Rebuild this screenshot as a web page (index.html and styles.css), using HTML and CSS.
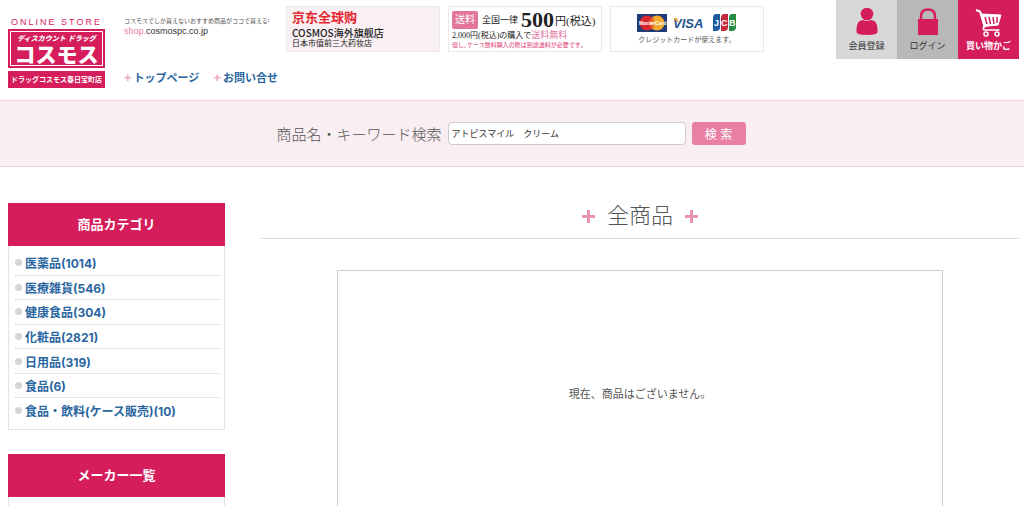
FILE: index.html
```html
<!DOCTYPE html>
<html lang="ja">
  <head>
    <meta charset="utf-8">
    <title>全商品</title>
    <link rel="stylesheet" href="styles.css">
  </head>
  <body>
    <header class="header">
      <a class="logo" href="#">
        <span class="logo-store">ONLINE STORE</span>
        <span class="logo-box">
          <span class="logo-sub">ディスカウント ドラッグ</span>
          <span class="logo-name">コスモス</span>
        </span>
        <span class="logo-branch">ドラッグコスモス春日宝町店</span>
      </a>
      <div class="intro">
        <p class="catch">コスモスでしか買えないおすすめ商品がココで買える!</p>
        <p class="domain"><span>shop.</span>cosmospc.co.jp</p>
        <nav class="nav">
          <a href="#"><b>+</b>トップページ</a>
          <a href="#"><b>+</b>お問い合せ</a>
        </nav>
      </div>
      <div class="banners">
        <a class="banner global" href="#">
          <span class="global-title">京东全球购</span>
          <span class="global-shop">COSMOS海外旗舰店</span>
          <span class="global-note">日本市值前三大药妆店</span>
        </a>
        <div class="banner postage">
          <div class="postage-main">
            <span class="postage-tag">送料</span>
            <span class="postage-area">全国一律</span>
            <span class="postage-price">500</span>
            <span class="postage-yen">円(税込)</span>
          </div>
          <div class="postage-free">2,000円(税込)の購入で<span>送料無料</span></div>
          <div class="postage-note">但し､ケース飲料購入の際は別途送料が必要です｡</div>
        </div>
        <div class="banner cards">
          <svg width="100" height="20" viewBox="0 0 100 20" role="img" aria-label="MasterCard VISA JCB">
            <rect x="0" y="1" width="30" height="18" fill="#1f3b78"/>
            <circle cx="10" cy="10" r="7.5" fill="#d9252c"/>
            <circle cx="20" cy="10" r="7.5" fill="#f3a92e"/>
            <path d="M13 6h4M12 8h5M12 12h5M13 14h4" stroke="#d9252c"/>
            <text x="2" y="12" class="mc-text">MasterCard</text>
            <text x="36" y="15" class="visa-text">VISA</text>
            <path d="M36 5h4l2 5z" fill="#e6a43a"/>
            <path d="M79 1h4v13q0 4-4 4h-3V5q0-4 3-4z" fill="#1d5c9f"/>
            <path d="M87 1h4v13q0 4-4 4h-3V5q0-4 3-4z" fill="#c5283d"/>
            <path d="M95 1h4v13q0 4-4 4h-3V5q0-4 3-4z" fill="#268b43"/>
            <text x="77" y="13" class="jcb-text">J</text>
            <text x="84" y="13" class="jcb-text">C</text>
            <text x="92" y="13" class="jcb-text">B</text>
          </svg>
          <span class="cards-note">クレジットカードが使えます。</span>
        </div>
      </div>
      <nav class="user">
        <a class="user-join" href="#">
          <svg width="22" height="30" viewBox="0 0 22 30" fill="#d51d5c">
            <circle cx="11" cy="7" r="6.3"/>
            <path d="M.5 25v-3q0-8.500 6.500-9 4 2 8 0 6.500.5 6.500 9v3q0 3-10.500 3T.5 25z"/>
          </svg>
          会員登録
        </a>
        <a class="user-login" href="#">
          <svg width="22" height="30" viewBox="0 0 22 30">
            <path d="M4 14V9.500q0-7 7-7t7 7V14" fill="none" stroke="#d51d5c" stroke-width="2.500"/>
            <rect x="1" y="12" width="20" height="16" fill="#d51d5c"/>
          </svg>
          ログイン
        </a>
        <a class="user-cart" href="#">
          <svg width="28" height="30" viewBox="0 0 28 30" fill="none" stroke="#fff">
            <path d="M1 3l4 1.500 5 16" stroke-width="2"/>
            <path d="M6 7l20 1-3 10-14 1.500z" fill="#fff"/>
            <path d="M10 10l2 7M14 10l1.500 7M18 10l1 7M22 10l0 6" stroke="#d51d5c" stroke-width="1.500"/>
            <path d="M9.500 19q-3 4 1 4h14" stroke-width="1.500"/>
            <circle cx="11" cy="27" r="2" stroke-width="1.500"/>
            <circle cx="22" cy="27" r="2" stroke-width="1.500"/>
          </svg>
          買い物かご
        </a>
      </nav>
    </header>

    <form class="search">
      <label for="keyword">商品名・キーワード検索</label>
      <input type="text" id="keyword" value="アトピスマイル　クリーム">
      <button type="submit">検 索</button>
    </form>

    <div class="content">
      <aside class="side">
        <section class="side-box">
          <h2>商品カテゴリ</h2>
          <ul>
            <li><a href="#">医薬品(1014)</a></li>
            <li><a href="#">医療雑貨(546)</a></li>
            <li><a href="#">健康食品(304)</a></li>
            <li><a href="#">化粧品(2821)</a></li>
            <li><a href="#">日用品(319)</a></li>
            <li><a href="#">食品(6)</a></li>
            <li><a href="#">食品・飲料(ケース販売)(10)</a></li>
          </ul>
        </section>
        <section class="side-box">
          <h2>メーカー一覧</h2>
          <ul></ul>
        </section>
      </aside>
      <main class="main">
        <h1>全商品</h1>
        <p class="empty">現在、商品はございません。</p>
      </main>
    </div>
  </body>
</html>
```
FILE: styles.css
```css
*{
  box-sizing: border-box;
}
body{
  margin: 0;
  background: #fff;
  color: #555;
  font-family: "Liberation Sans", "Noto Sans CJK JP", sans-serif;
  font-size: 12px;
}
p, h1, h2, ul{
  margin: 0;
  padding: 0;
}
a{
  color: #2a66a0;
  text-decoration: none;
}

/* header */
.header{
  display: flex;
  align-items: flex-start;
  min-height: 100px;
  padding: 0 5px 0 8px;
}
.logo{
  display: flex;
  flex-direction: column;
  width: 97px;
  padding-top: 16px;
  color: #fff;
  text-align: center;
  white-space: nowrap;
}
.logo-store{
  color: #d51d5c;
  font-size: 9px;
  line-height: 13px;
  letter-spacing: 2px;
}
.logo-box{
  display: flex;
  flex-direction: column;
  height: 39px;
  padding-top: 3px;
  background: #d51d5c;
  border: 1px solid #d51d5c;
  outline: 1px solid #fff;
  outline-offset: -3px;
}
.logo-sub{
  font-size: 7px;
  font-weight: 900;
  font-style: italic;
  line-height: 12px;
}
.logo-name{
  font-size: 21px;
  font-weight: 900;
  line-height: 19px;
}
.logo-branch{
  margin-top: 3px;
  background: #d51d5c;
  font-size: 7px;
  font-weight: bold;
  line-height: 17px;
}
.intro{
  width: 162px;
  margin-left: 19px;
  padding-top: 16px;
  white-space: nowrap;
}
.catch{
  font-size: 6px;
  line-height: 10px;
}
.domain{
  color: #333;
  font-size: 9px;
  line-height: 10px;
}
.domain span{
  color: #e87fa5;
}
.nav{
  display: flex;
  gap: 14px;
  margin-top: 34px;
  font-size: 11px;
  font-weight: bold;
  line-height: 16px;
}
.nav b{
  margin-right: 2px;
  color: #efa3bd;
  font-size: 13px;
}
.banners{
  display: flex;
  gap: 8px;
  padding-top: 6px;
}
.banner{
  display: flex;
  flex-direction: column;
  width: 154px;
  height: 46px;
  padding: 3px 5px;
  border: 1px solid #e9e9e9;
  white-space: nowrap;
}
.global{
  background: #f8f0f2;
  color: #222;
  font-family: "Liberation Sans", "Noto Sans CJK SC", sans-serif;
}
.global-title{
  color: #e5252d;
  font-size: 13px;
  font-weight: bold;
  line-height: 16px;
}
.global-shop{
  font-family: "Noto Sans CJK SC", sans-serif;
  font-size: 10px;
  font-weight: 500;
  line-height: 13px;
}
.global-note{
  font-size: 8px;
  line-height: 9px;
}
.postage{
  padding: 3px;
  color: #222;
  font-family: "Liberation Serif", "Noto Sans CJK JP", serif;
}
.postage-main{
  display: flex;
  align-items: center;
  height: 19px;
}
.postage-tag{
  width: 26px;
  margin-right: 4px;
  border-radius: 2px;
  background: #e4759d;
  color: #fff;
  font-size: 10px;
  line-height: 18px;
  text-align: center;
}
.postage-area{
  margin-right: 3px;
  font-size: 9px;
}
.postage-price{
  font-size: 22px;
  font-weight: bold;
  line-height: 19px;
}
.postage-yen{
  margin-left: 1px;
  font-size: 11px;
}
.postage-free{
  margin-top: 1px;
  font-size: 8px;
  line-height: 10px;
}
.postage-free span{
  color: #e4759d;
  font-size: 9px;
  line-height: 10px;
}
.postage-note{
  color: #e0356f;
  font-size: 6px;
  line-height: 9px;
}
.cards{
  align-items: center;
  padding-top: 6px;
}
.cards-note{
  font-size: 7px;
  line-height: 14px;
}
.mc-text{
  fill: #fff;
  font-size: 5px;
  font-weight: bold;
}
.visa-text{
  fill: #1f5591;
  font-size: 13px;
  font-style: italic;
  font-weight: bold;
}
.jcb-text{
  fill: #fff;
  font-size: 9px;
  font-weight: bold;
}
.user{
  display: flex;
  margin-left: auto;
}
.user a{
  display: flex;
  flex-direction: column;
  align-items: center;
  width: 61px;
  height: 59px;
  padding-top: 7px;
  font-size: 9px;
  line-height: 19px;
  color: #333;
}
.user .user-join{
  background: #d8d8d8;
}
.user .user-login{
  background: #b8b8b8;
}
.user .user-cart{
  background: #d51d5c;
  color: #fff;
  font-weight: bold;
}

/* search */
.search{
  display: flex;
  align-items: center;
  justify-content: center;
  gap: 6px;
  height: 67px;
  padding-right: 2px;
  border-top: 1px solid #f5cfdb;
  border-bottom: 1px solid #f5cfdb;
  background: #f9eef2;
}
.search label{
  font-size: 15px;
  font-weight: 300;
}
.search input{
  width: 238px;
  height: 23px;
  padding: 0 3px;
  border: 1px solid #ccc;
  border-radius: 4px;
  background: #fff;
  color: #333;
  font-family: inherit;
  font-size: 9px;
}
.search button{
  width: 54px;
  height: 23px;
  padding: 0;
  border: 0;
  border-radius: 3px;
  background: #e97fa4;
  color: #fff;
  font-family: inherit;
  font-size: 12px;
}

/* content */
.content{
  display: flex;
  gap: 36px;
  padding: 36px 5px 0 8px;
}
.side{
  flex: none;
  width: 217px;
}
.side-box{
  margin-bottom: 24px;
  border: 1px solid #e2e2e2;
}
.side-box h2{
  margin: -1px -1px 0;
  background: #d51d5c;
  color: #fff;
  font-size: 13px;
  line-height: 43px;
  text-align: center;
}
.side-box ul{
  display: flex;
  flex-direction: column;
  min-height: 183px;
  padding: 5px 4px 7px 6px;
  list-style: none;
}
.side-box li{
  display: flex;
  flex: 1;
  align-items: center;
  gap: 3px;
  border-bottom: 1px dotted #ccc;
  font-family: Inter, "Noto Sans CJK JP", sans-serif;
  font-weight: bold;
}
.side-box li:last-child{
  border-bottom: 0;
}
.side-box li::before{
  content: "";
  width: 7px;
  height: 7px;
  border-radius: 50%;
  background: #d5d5d5;
}
.main{
  flex: 1;
}
.main h1{
  display: flex;
  align-items: center;
  justify-content: center;
  gap: 12px;
  height: 36px;
  padding-bottom: 9px;
  border-bottom: 1px solid #ddd;
  font-size: 22px;
  font-weight: 300;
  line-height: 26px;
}
.main h1::before, .main h1::after{
  content: "";
  width: 13px;
  height: 13px;
  background:
    linear-gradient(#e994b2, #e994b2) center / 13px 3px no-repeat,
    linear-gradient(#e994b2, #e994b2) center / 3px 13px no-repeat;
}
.empty{
  width: 80%;
  margin: 31px auto 0;
  padding: 113px 0;
  border: 1px solid #ccc;
  font-size: 11px;
  line-height: 20px;
  text-align: center;
}
```
